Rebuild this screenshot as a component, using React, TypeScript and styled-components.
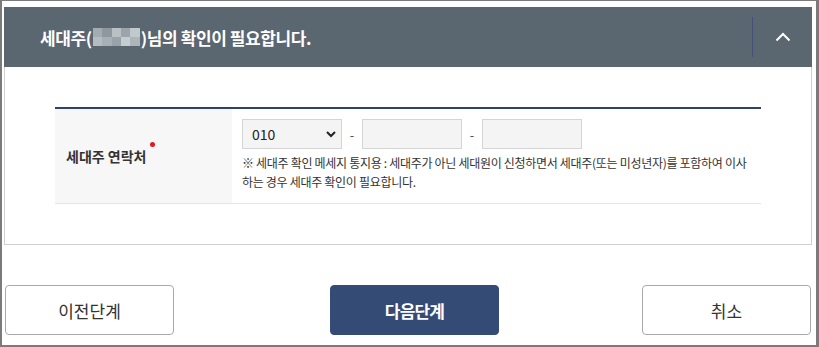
import React from 'react';
import styled, { createGlobalStyle } from 'styled-components';

const GlobalStyle = createGlobalStyle`
    html, body {
        margin: 0;
        padding: 0;
        background: #ffffff;
    }
    * {
        box-sizing: border-box;
    }
    body {
        font-family: 'Noto Sans CJK KR', 'Noto Sans', sans-serif;
        color: #333333;
    }
`;

const Frame = styled.div`
    width: 819px;
    height: 347px;
    border-style: solid;
    border-color: #7b7b7b;
    border-width: 1px 3px 2px 2px;
    padding: 6px 4px 0 2px;
    display: flex;
    flex-direction: column;
`;

const Header = styled.div`
    height: 60px;
    background: #5a6670;
    display: flex;
    align-items: center;
    padding-left: 36px;
`;

const Title = styled.h2`
    flex: 1;
    margin: 0;
    display: flex;
    align-items: center;
    font-size: 17px;
    font-weight: 700;
    letter-spacing: -0.4px;
    color: #ffffff;
`;

const Mosaic = styled.span`
    display: inline-grid;
    grid-template-columns: repeat(5, 9.4px);
    grid-template-rows: repeat(2, 9px);
    margin: 0 1px;
`;

const MosaicCell = styled.span<{ $tone: string }>`
    background: ${(p) => p.$tone};
`;

const Divider = styled.div`
    width: 1px;
    height: 40px;
    background: #42507a;
`;

const ToggleButton = styled.button`
    width: 59px;
    height: 60px;
    border: 0;
    background: transparent;
    display: flex;
    align-items: center;
    justify-content: center;
    padding: 0;
    cursor: pointer;
`;

const Body = styled.div`
    border: 1px solid #d0d0d0;
    border-top: 0;
    padding: 40px 50px 40px;
`;

const Table = styled.div`
    border-top: 2px solid #2e4170;
    border-bottom: 1px solid #e6e6e6;
    display: grid;
    grid-template-columns: 177px 1fr;
`;

const LabelCell = styled.div`
    background: #f7f7f7;
    display: flex;
    align-items: center;
    padding-left: 11px;
`;

const Label = styled.span`
    position: relative;
    font-size: 14px;
    font-weight: 700;
    letter-spacing: 0;
    color: #333333;
`;

const RequiredDot = styled.span`
    position: absolute;
    right: -9px;
    top: -4px;
    width: 5px;
    height: 5px;
    border-radius: 50%;
    background: #e8161e;
`;

const ValueCell = styled.div`
    padding: 10px 10px 12px;
`;

const PhoneRow = styled.div`
    display: flex;
    align-items: center;
`;

const SelectWrap = styled.div`
    position: relative;
    width: 100px;
    height: 30px;
`;

const Select = styled.select`
    width: 100%;
    height: 100%;
    appearance: none;
    border: 1px solid #d5d5d5;
    background: #f4f4f4;
    padding: 0 0 0 9px;
    font-family: 'Noto Sans CJK KR', 'Noto Sans', sans-serif;
    font-size: 14px;
    color: #222222;
    border-radius: 0;
    outline: none;
`;

const SelectArrow = styled.svg`
    position: absolute;
    right: 6px;
    top: 12px;
    pointer-events: none;
`;

const Dash = styled.span`
    width: 20px;
    text-align: center;
    font-size: 13px;
    color: #555555;
`;

const Input = styled.input`
    width: 100px;
    height: 30px;
    border: 1px solid #d5d5d5;
    background: #f4f4f4;
    padding: 0 8px;
    border-radius: 0;
    outline: none;
`;

const Note = styled.p`
    margin: 4px 0 0;
    font-size: 12px;
    line-height: 19px;
    letter-spacing: -0.3px;
    color: #333333;
    white-space: nowrap;
`;

const ButtonRow = styled.div`
    margin-top: 40px;
    padding: 0 0 0 1px;
    display: flex;
    align-items: center;
`;

const Button = styled.button<{ $primary?: boolean }>`
    width: 169px;
    height: 50px;
    border-radius: 4px;
    border: 1px solid ${(p) => (p.$primary ? '#344b76' : '#a9a9a9')};
    background: ${(p) => (p.$primary ? '#344b76' : '#ffffff')};
    color: ${(p) => (p.$primary ? '#ffffff' : '#333333')};
    font-family: 'Noto Sans CJK KR', 'Noto Sans', sans-serif;
    font-size: 17px;
    font-weight: ${(p) => (p.$primary ? 700 : 400)};
    letter-spacing: ${(p) => (p.$primary ? '-0.8px' : '0')};
    cursor: pointer;
`;

const Spacer = styled.div<{ $w: number }>`
    width: ${(p) => p.$w}px;
    flex-shrink: 0;
`;

const MOSAIC_TONES = [
    '#a3abb3', '#8f989f', '#b9c1c4', '#9ca5ad', '#c2c9cc',
    '#b4bcc1', '#a7b0b6', '#9aa3a9', '#c6cdd0', '#adb5bb',
];

export default function App() {
    return (
        <>
            <GlobalStyle />
            <Frame>
                <Header>
                    <Title>
                        세대주(
                        <Mosaic aria-label="이름 가림">
                            {MOSAIC_TONES.map((tone, i) => (
                                <MosaicCell key={i} $tone={tone} />
                            ))}
                        </Mosaic>
                        )님의 확인이 필요합니다.
                    </Title>
                    <Divider />
                    <ToggleButton aria-label="접기">
                        <svg width="16" height="10" viewBox="0 0 16 10">
                            <polyline points="1.5,8.5 8,2 14.5,8.5" fill="none" stroke="#ffffff" strokeWidth="2" />
                        </svg>
                    </ToggleButton>
                </Header>
                <Body>
                    <Table>
                        <LabelCell>
                            <Label>
                                세대주 연락처
                                <RequiredDot />
                            </Label>
                        </LabelCell>
                        <ValueCell>
                            <PhoneRow>
                                <SelectWrap>
                                    <Select defaultValue="010">
                                        <option value="010">010</option>
                                        <option value="011">011</option>
                                        <option value="016">016</option>
                                        <option value="017">017</option>
                                        <option value="019">019</option>
                                    </Select>
                                    <SelectArrow width="10" height="7" viewBox="0 0 10 7">
                                        <polyline points="1,1 5,5 9,1" fill="none" stroke="#222222" strokeWidth="2" />
                                    </SelectArrow>
                                </SelectWrap>
                                <Dash>-</Dash>
                                <Input />
                                <Dash>-</Dash>
                                <Input />
                            </PhoneRow>
                            <Note>
                                ※ 세대주 확인 메세지 통지용 : 세대주가 아닌 세대원이 신청하면서 세대주(또는 미성년자)를 포함하여 이사
                                <br />
                                하는 경우 세대주 확인이 필요합니다.
                            </Note>
                        </ValueCell>
                    </Table>
                </Body>
                <ButtonRow>
                    <Button>이전단계</Button>
                    <Spacer $w={156} />
                    <Button $primary>다음단계</Button>
                    <Spacer $w={143} />
                    <Button>취소</Button>
                </ButtonRow>
            </Frame>
        </>
    );
}
